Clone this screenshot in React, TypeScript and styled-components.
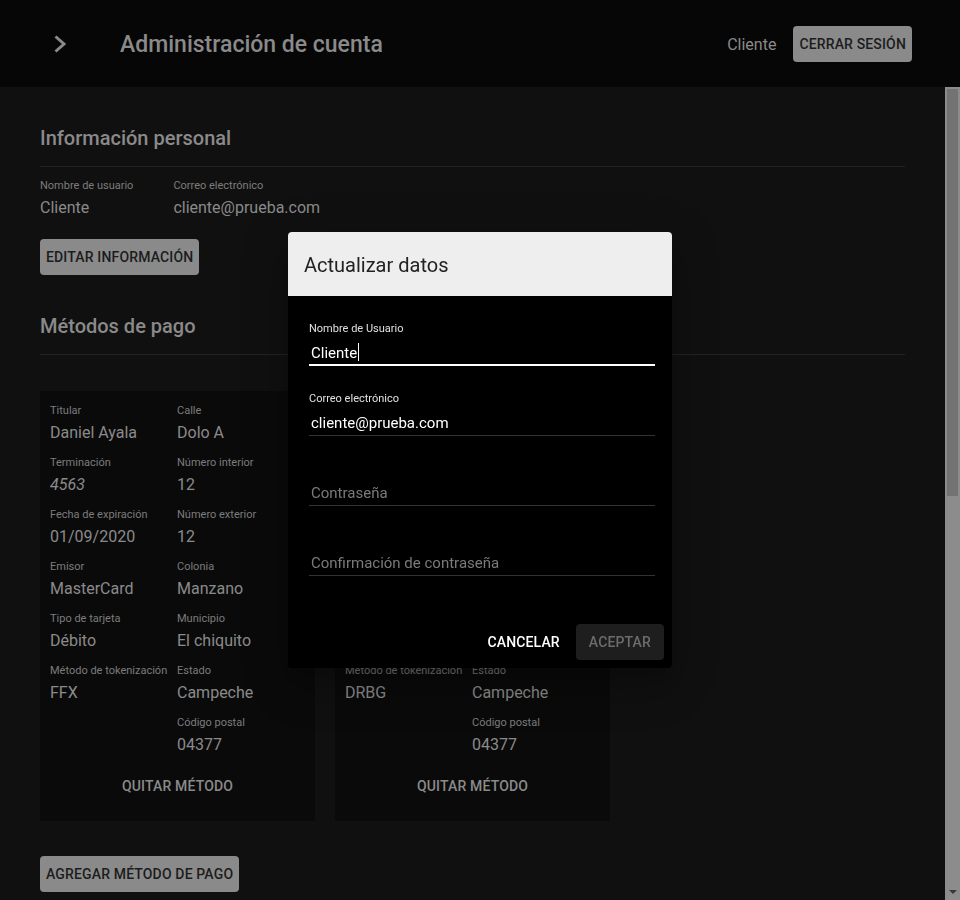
import React from "react";
import styled, { createGlobalStyle } from "styled-components";

const GlobalStyle = createGlobalStyle`
  html, body {
    margin: 0;
    padding: 0;
    background: #101010;
    overflow: hidden;
    font-family: Roboto, "Liberation Sans", sans-serif;
  }
`;

const Page = styled.div`
  display: flex;
  flex-direction: column;
  height: 100vh;
`;

const AppBar = styled.header`
  display: flex;
  align-items: center;
  flex-shrink: 0;
  height: 87px;
  padding: 0 48px;
  background: #060606;
  box-sizing: border-box;
`;

const MenuIcon = styled.svg`
  width: 24px;
  height: 24px;
  flex-shrink: 0;
`;

const Title = styled.h1`
  flex: 1;
  margin: 2px 0 0 48px;
  font-size: 23px;
  font-weight: 500;
  color: #8a8a8a;
`;

const UserName = styled.span`
  margin: 2px 17px 0 0;
  font-size: 16px;
  color: #8a8a8a;
`;

const Button = styled.button<{ $variant?: "contained" | "text" | "disabled" }>`
  height: 36px;
  padding: 0 6px;
  border: none;
  border-radius: 4px;
  font-family: Roboto, "Liberation Sans", sans-serif;
  font-size: 14px;
  font-weight: 500;
  letter-spacing: 0.15px;
  text-transform: uppercase;
  cursor: pointer;
  background: ${(p) =>
    p.$variant === "text" ? "transparent" : p.$variant === "disabled" ? "#1e1e1e" : "#8a8a8a"};
  color: ${(p) =>
    p.$variant === "text" ? "#8a8a8a" : p.$variant === "disabled" ? "#6c6c6c" : "#1c1c1c"};
`;

const Body = styled.div`
  flex: 1;
  min-height: 0;
  display: flex;
`;

const Content = styled.main`
  flex: 1;
  min-width: 0;
  overflow: hidden;
  padding: 39px 40px 0;
`;

const ScrollTrack = styled.div`
  width: 15px;
  flex-shrink: 0;
  display: flex;
  flex-direction: column;
  align-items: center;
  padding: 2px 2px 6px;
  box-sizing: border-box;
  background: #8c8c8c;
`;

const ScrollThumb = styled.div`
  width: 11px;
  height: 407px;
  background: #737373;
`;

const ScrollArrow = styled.div`
  margin-top: auto;
  width: 0;
  height: 0;
  border-left: 4px solid transparent;
  border-right: 4px solid transparent;
  border-top: 4px solid #383838;
`;

const SectionTitle = styled.h2<{ $top?: number }>`
  margin: ${(p) => p.$top ?? 0}px 0 16px;
  font-size: 20px;
  line-height: 24px;
  font-weight: 500;
  color: #8a8a8a;
`;

const Divider = styled.hr`
  margin: 0;
  border: none;
  border-top: 1px solid #222;
`;

const InfoRow = styled.div`
  display: flex;
  gap: 40px;
  margin: 11px 0 19px;
`;

const Field = styled.div`
  display: flex;
  flex-direction: column;
  gap: 2px;
`;

const Label = styled.span`
  font-size: 11px;
  line-height: 16px;
  color: #7c7c7c;
  white-space: nowrap;
`;

const Value = styled.span<{ $italic?: boolean }>`
  font-size: 16px;
  line-height: 24px;
  color: #8a8a8a;
  font-style: ${(p) => (p.$italic ? "italic" : "normal")};
`;

const Cards = styled.div`
  display: flex;
  gap: 20px;
  margin: 36px 0 35px;
`;

const Card = styled.section`
  display: flex;
  flex-direction: column;
  width: 275px;
  padding: 11px 10px 17px;
  box-sizing: border-box;
  background: #0a0a0a;
`;

const CardGrid = styled.div`
  display: grid;
  grid-template-columns: 127px 1fr;
`;

const CardColumn = styled.div`
  display: flex;
  flex-direction: column;
  gap: 9px;
`;

const CardField = styled.div`
  display: flex;
  flex-direction: column;
  gap: 1px;
  & > span:first-child {
    line-height: 18px;
  }
`;

const QuitButton = styled(Button)`
  align-self: center;
  margin-top: 11px;
`;

const Overlay = styled.div`
  position: fixed;
  inset: 0;
  display: flex;
  align-items: center;
  justify-content: center;
`;

const Dialog = styled.div`
  width: 384px;
  border-radius: 4px;
  overflow: hidden;
  background: #000;
  box-shadow: 0 11px 15px -7px rgba(0, 0, 0, 0.2), 0 24px 38px 3px rgba(0, 0, 0, 0.14),
    0 9px 46px 8px rgba(0, 0, 0, 0.12);
`;

const DialogHeader = styled.div`
  height: 64px;
  display: flex;
  align-items: center;
  padding: 1px 16px 0;
  box-sizing: border-box;
  background: #eeeeee;
  font-size: 20px;
  color: #222;
`;

const DialogBody = styled.div`
  display: flex;
  flex-direction: column;
  gap: 24px;
  padding: 24px 17px 40px 21px;
`;

const TextField = styled.div`
  display: flex;
  flex-direction: column;
`;

const FieldLabel = styled.span`
  font-size: 11px;
  line-height: 18px;
  height: 18px;
  color: #e0e0e0;
`;

const Input = styled.div<{ $focused?: boolean; $placeholder?: boolean }>`
  margin-top: 5px;
  padding: 0 0 ${(p) => (p.$focused ? 1 : 2)}px 2px;
  font-size: 15px;
  line-height: 20px;
  color: ${(p) => (p.$placeholder ? "#7a7a7a" : "#fff")};
  border-bottom: ${(p) => (p.$focused ? "2px solid #fff" : "1px solid #333")};
`;

const Caret = styled.span`
  display: inline-block;
  width: 1px;
  height: 18px;
  margin-left: 1px;
  vertical-align: -3px;
  background: #fff;
`;

const DialogActions = styled.div`
  display: flex;
  justify-content: flex-end;
  gap: 8px;
  padding: 8px;
`;

const CancelButton = styled(Button)`
  padding: 0 8px;
  color: #fff;
`;

const AcceptButton = styled(Button)`
  padding: 0 13px;
`;

type Item = { label: string; value: string; italic?: boolean };

const methods: { left: Item[]; right: Item[] }[] = [
  {
    left: [
      { label: "Titular", value: "Daniel Ayala" },
      { label: "Terminación", value: "4563", italic: true },
      { label: "Fecha de expiración", value: "01/09/2020" },
      { label: "Emisor", value: "MasterCard" },
      { label: "Tipo de tarjeta", value: "Débito" },
      { label: "Método de tokenización", value: "FFX" },
    ],
    right: [
      { label: "Calle", value: "Dolo A" },
      { label: "Número interior", value: "12" },
      { label: "Número exterior", value: "12" },
      { label: "Colonia", value: "Manzano" },
      { label: "Municipio", value: "El chiquito" },
      { label: "Estado", value: "Campeche" },
      { label: "Código postal", value: "04377" },
    ],
  },
  {
    left: [
      { label: "Titular", value: "Daniel Ayala" },
      { label: "Terminación", value: "8812", italic: true },
      { label: "Fecha de expiración", value: "01/12/2021" },
      { label: "Emisor", value: "Visa" },
      { label: "Tipo de tarjeta", value: "Crédito" },
      { label: "Método de tokenización", value: "DRBG" },
    ],
    right: [
      { label: "Calle", value: "Dolo A" },
      { label: "Número interior", value: "12" },
      { label: "Número exterior", value: "12" },
      { label: "Colonia", value: "Manzano" },
      { label: "Municipio", value: "El chiquito" },
      { label: "Estado", value: "Campeche" },
      { label: "Código postal", value: "04377" },
    ],
  },
];

const renderColumn = (items: Item[]) => (
  <CardColumn>
    {items.map((it) => (
      <CardField key={it.label}>
        <Label>{it.label}</Label>
        <Value $italic={it.italic}>{it.value}</Value>
      </CardField>
    ))}
  </CardColumn>
);

const App = () => {
  return (
    <>
      <GlobalStyle />
      <Page>
        <AppBar>
          <MenuIcon viewBox="0 0 24 24">
            <polyline
              points="7.5,4.5 16,12 7.5,19.5"
              fill="none"
              stroke="#8a8a8a"
              strokeWidth="3"
              strokeLinejoin="miter"
            />
          </MenuIcon>
          <Title>Administración de cuenta</Title>
          <UserName>Cliente</UserName>
          <Button>Cerrar sesión</Button>
        </AppBar>

        <Body>
          <Content>
            <SectionTitle>Información personal</SectionTitle>
            <Divider />
            <InfoRow>
              <Field>
                <Label>Nombre de usuario</Label>
                <Value>Cliente</Value>
              </Field>
              <Field>
                <Label>Correo electrónico</Label>
                <Value>cliente@prueba.com</Value>
              </Field>
            </InfoRow>
            <Button>Editar información</Button>

            <SectionTitle $top={39}>Métodos de pago</SectionTitle>
            <Divider />
            <Cards>
              {methods.map((m, i) => (
                <Card key={i}>
                  <CardGrid>
                    {renderColumn(m.left)}
                    {renderColumn(m.right)}
                  </CardGrid>
                  <QuitButton $variant="text">Quitar método</QuitButton>
                </Card>
              ))}
            </Cards>
            <Button>Agregar método de pago</Button>
          </Content>
          <ScrollTrack>
            <ScrollThumb />
            <ScrollArrow />
          </ScrollTrack>
        </Body>
      </Page>

      <Overlay>
        <Dialog>
          <DialogHeader>Actualizar datos</DialogHeader>
          <DialogBody>
            <TextField>
              <FieldLabel>Nombre de Usuario</FieldLabel>
              <Input $focused>
                Cliente
                <Caret />
              </Input>
            </TextField>
            <TextField>
              <FieldLabel>Correo electrónico</FieldLabel>
              <Input>cliente@prueba.com</Input>
            </TextField>
            <TextField>
              <FieldLabel />
              <Input $placeholder>Contraseña</Input>
            </TextField>
            <TextField>
              <FieldLabel />
              <Input $placeholder>Confirmación de contraseña</Input>
            </TextField>
          </DialogBody>
          <DialogActions>
            <CancelButton $variant="text">Cancelar</CancelButton>
            <AcceptButton $variant="disabled">Aceptar</AcceptButton>
          </DialogActions>
        </Dialog>
      </Overlay>
    </>
  );
};

export default App;
